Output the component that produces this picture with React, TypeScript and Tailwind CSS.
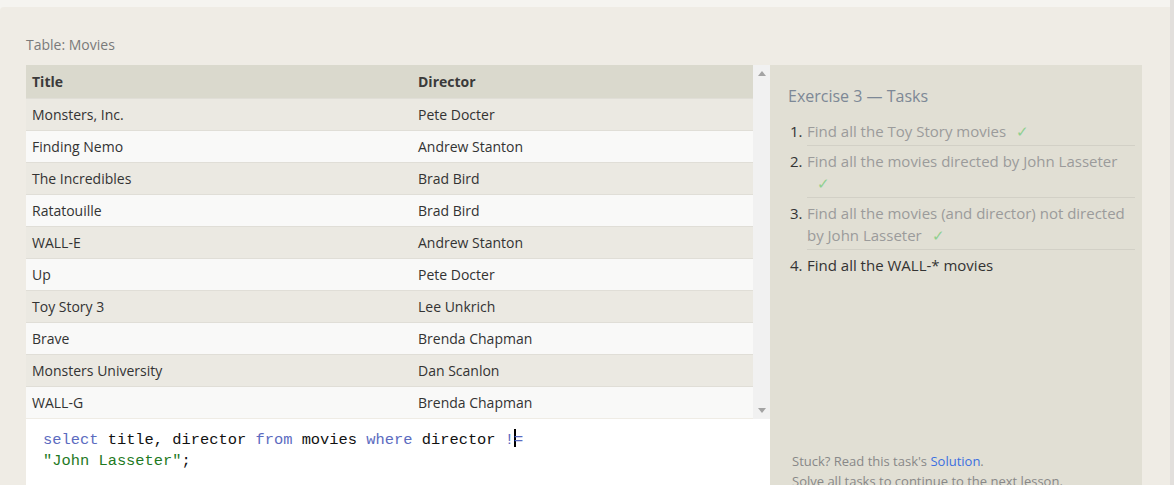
import React from "react";

const rows: [string, string][] = [
  ["Monsters, Inc.", "Pete Docter"],
  ["Finding Nemo", "Andrew Stanton"],
  ["The Incredibles", "Brad Bird"],
  ["Ratatouille", "Brad Bird"],
  ["WALL-E", "Andrew Stanton"],
  ["Up", "Pete Docter"],
  ["Toy Story 3", "Lee Unkrich"],
  ["Brave", "Brenda Chapman"],
  ["Monsters University", "Dan Scanlon"],
  ["WALL-G", "Brenda Chapman"],
];

function Check() {
  return <span className="ml-[10px] text-[#8fd08f]">✓</span>;
}

export default function App() {
  return (
    <div
      className="w-[1174px] h-[485px] overflow-hidden bg-[#f5f4f0] flex"
      style={{ fontFamily: '"Open Sans", "Noto Sans", sans-serif' }}
    >
      <div className="flex-1 mt-[7px] bg-[#efece5] rounded-tl-[4px] flex flex-col pl-[26px] pr-[28px]">
        <div className="h-[58px] flex items-end pb-[10px] text-[14px] text-[#7a7a7a]">Table: Movies</div>
        <div className="flex flex-1 min-h-0">
          <div className="w-[744px] flex flex-col">
            <div className="flex h-[354px]">
              <div className="flex-1 flex flex-col text-[14px] text-[#333]">
                <div className="flex h-[33px] items-center bg-[#dad9cd] font-bold text-[#3a3a3a]">
                  <div className="w-[392px] pl-[6px]">Title</div>
                  <div className="flex-1">Director</div>
                </div>
                {rows.map(([t, d], i) => (
                  <div
                    key={i}
                    className={
                      "flex h-[32px] items-center border-t border-[#e0ded7] " +
                      (i % 2 === 0 ? "bg-[#ebe9e2]" : "bg-[#f9f9f8]")
                    }
                  >
                    <div className="w-[392px] pl-[6px]">{t}</div>
                    <div className="flex-1">{d}</div>
                  </div>
                ))}
              </div>
              <div className="w-[17px] bg-[#f1f1f1] flex flex-col justify-between items-center pt-[6px] pb-[6px]">
                <svg width="8" height="5" viewBox="0 0 8 5"><path d="M4 0 L8 5 L0 5 Z" fill="#a3a3a3" /></svg>
                <svg width="8" height="5" viewBox="0 0 8 5"><path d="M0 0 L8 0 L4 5 Z" fill="#a3a3a3" /></svg>
              </div>
            </div>
            <div
              className="flex-1 bg-white pl-[17px] pt-[10px] text-[15.4px] leading-[21px] text-[#111]"
              style={{ fontFamily: '"Liberation Mono", "DejaVu Sans Mono", monospace' }}
            >
              <div className="whitespace-pre">
                <span className="text-[#5c6bbf]">select</span> title, director <span className="text-[#5c6bbf]">from</span> movies <span className="text-[#5c6bbf]">where</span> director <span className="text-[#5c6bbf]">!</span>
                <span className="inline-block w-[2px] h-[18px] bg-black align-[-3px] -mr-[2px]"></span>
                <span className="text-[#5c6bbf]">=</span>
              </div>
              <div className="whitespace-pre">
                <span className="text-[#1f7a1f]">"John Lasseter"</span>;
              </div>
            </div>
          </div>
          <div className="w-[372px] bg-[#e1dfd4] flex flex-col pl-[18px] pr-[7px]">
            <div className="pt-[20px] text-[16px] text-[#7d8896] leading-[22px]">Exercise 3 — Tasks</div>
            <ol className="mt-[13px] text-[15px] leading-[22px]">
              <li className="flex">
                <span className="w-[19px] pl-[2px] text-[#333]">1.</span>
                <div className="flex-1 text-[#9b9b9b] pb-[3px] border-b border-[#d2d0c6]">Find all the Toy Story movies<Check /></div>
              </li>
              <li className="flex mt-[4px]">
                <span className="w-[19px] pl-[2px] text-[#333]">2.</span>
                <div className="flex-1 text-[#9b9b9b] pb-[3px] border-b border-[#d2d0c6]">
                  Find all the movies directed by John Lasseter
                  <div><Check /></div>
                </div>
              </li>
              <li className="flex mt-[4px]">
                <span className="w-[19px] pl-[2px] text-[#333]">3.</span>
                <div className="flex-1 text-[#9b9b9b] pb-[3px] border-b border-[#d2d0c6]">
                  Find all the movies (and director) not directed by John Lasseter<Check />
                </div>
              </li>
              <li className="flex mt-[4px]">
                <span className="w-[19px] pl-[2px] text-[#333]">4.</span>
                <div className="flex-1 text-[#333]">Find all the WALL-* movies</div>
              </li>
            </ol>
            <div className="mt-auto text-[13px] leading-[20px] text-[#888] pl-[4px] translate-y-[6px]">
              <div>Stuck? Read this task's <span className="text-[#3b6fe0]">Solution</span>.</div>
              <div>Solve all tasks to continue to the next lesson.</div>
            </div>
          </div>
        </div>
      </div>
      <div className="w-[4px] bg-[#e2dfdc]"></div>
    </div>
  );
}
